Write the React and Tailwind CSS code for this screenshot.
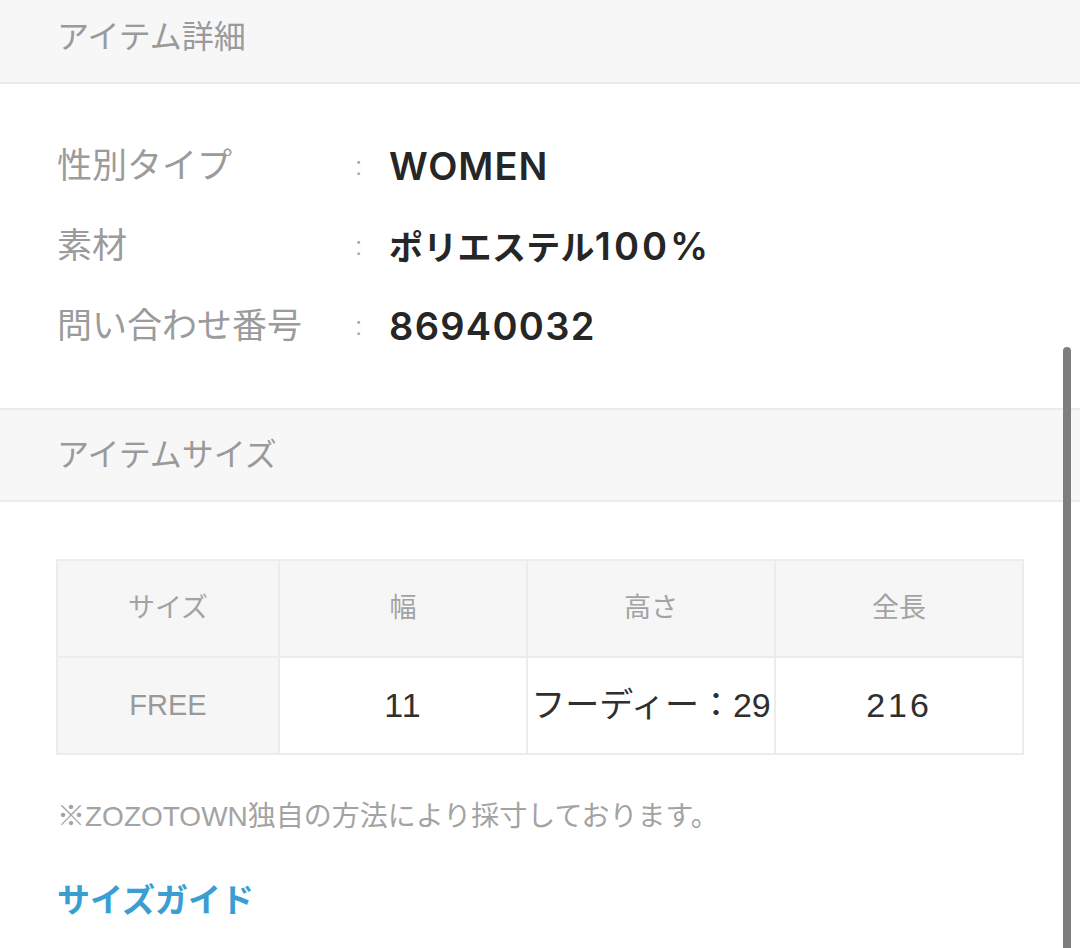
import React from "react";

const font = { fontFamily: '"Liberation Sans", "Noto Sans CJK JP", sans-serif' };
const valueFont = { fontFamily: 'Inter, "Noto Sans CJK JP", sans-serif' };

function InfoRow({ label, children }) {
  return (
    <div className="flex h-[80px] items-center">
      <div className="w-[355px] shrink-0 pl-[57px] text-[35px] text-[#9b9b9b] whitespace-nowrap">{label}</div>
      <div className="w-[34px] shrink-0 text-[26px] text-[#a8a8a8]">:</div>
      <div className="flex items-baseline font-semibold text-[#262626] whitespace-nowrap" style={valueFont}>{children}</div>
    </div>
  );
}

export default function App() {
  return (
    <div className="relative w-[1080px] h-[948px] overflow-hidden bg-white" style={font}>
      <div className="flex h-[84px] items-center border-b-2 border-[#ebebeb] bg-[#f7f7f7] pb-[8px] pl-[57px] text-[32px] text-[#9a9a9a]">
        アイテム詳細
      </div>

      <div className="pt-[42px] pb-[42px]">
        <InfoRow label="性別タイプ">
          <span className="text-[38px] tracking-[1px]">WOMEN</span>
        </InfoRow>
        <InfoRow label="素材">
          <span className="text-[34px] tracking-[0.3px]">ポリエステル</span>
          <span className="text-[38px] tracking-[3px]">100%</span>
        </InfoRow>
        <InfoRow label="問い合わせ番号">
          <span className="text-[38px] tracking-[1.3px]">86940032</span>
        </InfoRow>
      </div>

      <div className="flex h-[94px] items-center border-y-2 border-[#ebebeb] bg-[#f7f7f7] pl-[57px] text-[32px] text-[#9a9a9a]">
        アイテムサイズ
      </div>

      <div className="mt-[57px] ml-[56px] w-[968px] bg-[#ececec] p-[2px]">
        <div className="grid grid-cols-[220px_246px_246px_246px] gap-[2px]">
          <div className="flex h-[95px] items-center justify-center bg-[#f6f6f6] text-[27px] text-[#a3a3a3]">サイズ</div>
          <div className="flex h-[95px] items-center justify-center bg-[#f6f6f6] text-[27px] text-[#a3a3a3]">幅</div>
          <div className="flex h-[95px] items-center justify-center bg-[#f6f6f6] text-[27px] text-[#a3a3a3]">高さ</div>
          <div className="flex h-[95px] items-center justify-center bg-[#f6f6f6] text-[27px] text-[#a3a3a3]">全長</div>
          <div className="flex h-[95px] items-center justify-center bg-[#f6f6f6] text-[29px] text-[#999999]">FREE</div>
          <div className="flex h-[95px] items-center justify-center bg-white text-[34px] text-[#2f2f2f] tracking-[1px]">11</div>
          <div className="flex h-[95px] items-center justify-center bg-white text-[34px] text-[#2f2f2f] whitespace-nowrap">フーディー：29</div>
          <div className="flex h-[95px] items-center justify-center bg-white text-[34px] text-[#2f2f2f] tracking-[3px]">216</div>
        </div>
      </div>

      <div className="mt-[44px] pl-[57px] text-[28px] leading-[36px] text-[#a3a3a3] whitespace-nowrap">
        ※ZOZOTOWN独自の方法により採寸しております。
      </div>

      <div className="mt-[44px] pl-[57px] text-[33px] font-bold leading-[44px] text-[#3a9ed2]">
        サイズガイド
      </div>

      <div className="absolute left-[1063px] top-[347px] h-[620px] w-[8px] rounded-full bg-[#7e7e7e]" />
    </div>
  );
}
